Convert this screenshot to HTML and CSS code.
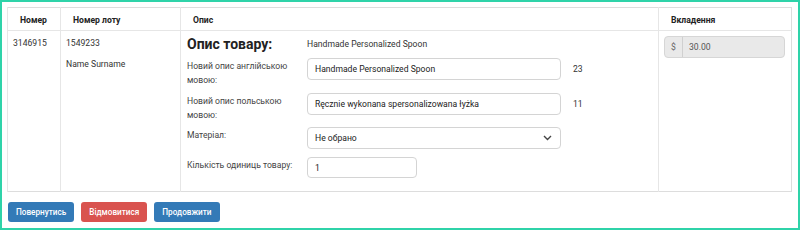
FILE: index.html
```html
<!DOCTYPE html>
<html lang="uk">
<head>
    <meta charset="UTF-8">
    <title>Опис товару</title>
    <link rel="stylesheet" href="styles.css">
</head>
<body>
    <div class="frame">
        <table class="items">
            <thead>
                <tr>
                    <th class="col-num">Номер</th>
                    <th class="col-lot">Номер лоту</th>
                    <th class="col-desc">Опис</th>
                    <th class="col-att">Вкладення</th>
                </tr>
            </thead>
            <tbody>
                <tr>
                    <td>3146915</td>
                    <td>
                        <div>1549233</div>
                        <div class="buyer">Name Surname</div>
                    </td>
                    <td class="desc">
                        <div class="row title-row">
                            <div class="label title">Опис товару:</div>
                            <div class="value">Handmade Personalized Spoon</div>
                        </div>
                        <div class="row">
                            <div class="label">Новий опис англійською мовою:</div>
                            <input class="field" type="text" value="Handmade Personalized Spoon">
                            <span class="count">23</span>
                        </div>
                        <div class="row second">
                            <div class="label">Новий опис польською мовою:</div>
                            <input class="field" type="text" value="Ręcznie wykonana spersonalizowana łyżka">
                            <span class="count">11</span>
                        </div>
                        <div class="row short">
                            <div class="label">Матеріал:</div>
                            <div class="field select">
                                <span>Не обрано</span>
                                <svg width="9" height="6" viewBox="0 0 9 6"><path d="M1 1l3.5 3.5L8 1" fill="none" stroke="#444" stroke-width="1.4"/></svg>
                            </div>
                        </div>
                        <div class="row short last">
                            <div class="label">Кількість одиниць товару:</div>
                            <input class="field qty" type="text" value="1">
                        </div>
                    </td>
                    <td class="att">
                        <div class="price">
                            <span class="addon">$</span>
                            <span class="amount">30.00</span>
                        </div>
                    </td>
                </tr>
            </tbody>
        </table>
        <div class="actions">
            <button class="btn blue">Повернутись</button>
            <button class="btn red">Відмовитися</button>
            <button class="btn blue">Продовжити</button>
        </div>
    </div>
</body>
</html>
```

FILE: styles.css
```css
html, body {
    margin: 0;
    padding: 0;
}
body {
    font-family: Roboto, 'Noto Sans', sans-serif;
    font-size: 8.6px;
    color: #333;
    background: #fff;
}
.frame {
    width: 800px;
    height: 230px;
    box-sizing: border-box;
    border: 2px solid #2fd3a9;
    padding: 5px 5px 0 5px;
}
.items {
    border-collapse: collapse;
    width: 784px;
    table-layout: fixed;
    border: 1px solid #ddd;
}
.items th {
    box-sizing: border-box;
    text-align: left;
    font-weight: bold;
    color: #222;
    height: 23px;
    padding: 2px 12px 0 12px;
    border-left: 1px solid #e6e6e6;
    border-bottom: 1px solid #e6e6e6;
}
.col-num { width: 53px; }
.col-lot { width: 120px; }
.col-desc { width: 478px; }
.col-att { width: 133px; }
.items td {
    vertical-align: top;
    padding: 7px 5px 0 5px;
    height: 153px;
    border-left: 1px solid #e6e6e6;
    line-height: 11px;
}
.buyer {
    margin-top: 10px;
}
.items td.desc {
    padding: 5px 6px 0 6px;
}
.items td.att {
    padding-right: 6px;
}
.row {
    display: flex;
    align-items: flex-start;
    margin-bottom: 6px;
}
.row.second {
    margin-bottom: 5px;
}
.row.short {
    margin-bottom: 8px;
}
.row.last {
    margin-bottom: 0;
}
.title-row {
    margin-bottom: 6px;
    align-items: center;
}
.label {
    width: 120px;
    flex-shrink: 0;
    line-height: 14px;
    color: #444;
    padding-top: 1px;
}
.label.title {
    font-size: 14px;
    font-weight: bold;
    color: #222;
    line-height: 16px;
    padding-top: 0;
}
.value {
    color: #333;
}
.field {
    box-sizing: border-box;
    width: 254px;
    height: 22px;
    border: 1px solid #d4d4d4;
    border-radius: 4px;
    padding: 0 7px;
    font-family: inherit;
    font-size: 8.6px;
    color: #222;
    background: #fff;
}
.select {
    display: flex;
    align-items: center;
    justify-content: space-between;
    padding-right: 8px;
}
.qty {
    width: 110px;
    height: 21px;
}
.count {
    margin-left: 12px;
    line-height: 22px;
}
.price {
    display: flex;
    height: 20px;
    border: 1px solid #d6d6d6;
    border-radius: 4px;
    background: #e9e9e9;
    margin-top: -2px;
    align-items: center;
    overflow: hidden;
}
.addon {
    width: 17px;
    text-align: center;
    border-right: 1px solid #d0d0d0;
    line-height: 20px;
    color: #666;
}
.amount {
    padding-left: 6px;
    color: #555;
}
.actions {
    display: flex;
    gap: 7px;
    margin-top: 10px;
    padding-left: 1px;
}
.btn {
    border: none;
    border-radius: 3px;
    color: #fff;
    font-family: inherit;
    font-size: 8.2px;
    font-weight: 500;
    height: 20px;
    padding: 0 8px;
    cursor: pointer;
}
.blue {
    background: #337ab7;
}
.red {
    background: #d9534f;
}
```
